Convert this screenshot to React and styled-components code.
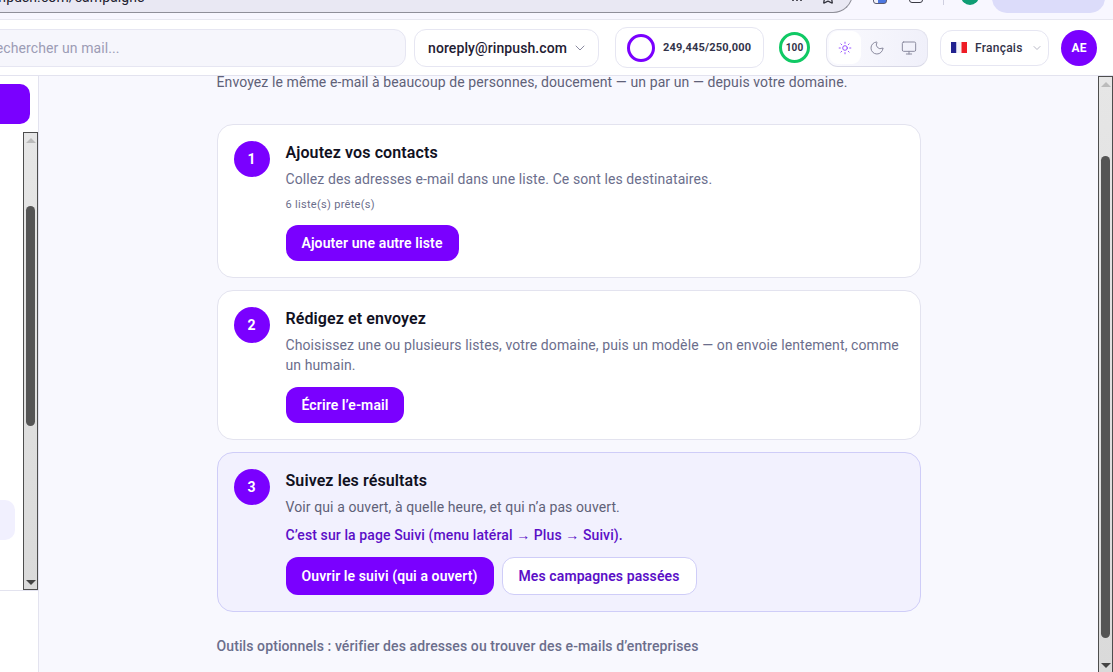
import React from 'react'
import styled, { createGlobalStyle } from 'styled-components'
import { ChevronDown, Moon, Monitor, Star, Sun } from 'lucide-react'

const GlobalStyle = createGlobalStyle`
  html, body {
    margin: 0;
    height: 100%;
    overflow: hidden;
  }
  * {
    box-sizing: border-box;
  }
  body {
    font-family: Roboto, "Noto Sans", sans-serif;
    letter-spacing: 0.1px;
    background: #f8f8fe;
    color: #11111f;
  }
`

const Page = styled.div`
  width: 1113px;
  height: 672px;
  display: flex;
  flex-direction: column;
  overflow: hidden;
`

const Chrome = styled.div`
  height: 20px;
  flex: none;
  display: flex;
  align-items: flex-start;
  background: #f8f7ff;
  overflow: hidden;
  border-bottom: 1px solid #e7e7f0;
`

const UrlBar = styled.div`
  width: 853px;
  height: 30px;
  margin-top: -17px;
  flex: none;
  display: flex;
  align-items: flex-start;
  padding: 6px 16px 0 0;
  background: #e9e8f3;
  border-bottom: 1px solid #8f8f99;
  border-right: 1px solid #8f8f99;
  border-bottom-right-radius: 20px;
  font-size: 14px;
  color: #222230;
  white-space: nowrap;
`

const UrlText = styled.span`
  margin-left: -10px;
  flex: 1;
`

const Translate = styled.div`
  width: 10px;
  height: 12px;
  flex: none;
  margin: 0 18px 0 0;
  border-bottom: 2px dotted #55555f;
`

const StarSlot = styled.div`
  flex: none;
  color: #33333d;
  svg {
    display: block;
  }
`

const ChromeIcons = styled.div`
  flex: 1;
  display: flex;
  align-items: flex-start;
`

const ExtensionIcon = styled.div`
  width: 14px;
  height: 14px;
  flex: none;
  margin: -10px 0 0 20px;
  background: linear-gradient(90deg, #f2f2fa 35%, #4d78e0 35%);
  border: 1px solid #5a5a70;
  border-radius: 3px;
`

const TabsIcon = styled.div`
  width: 14px;
  height: 14px;
  flex: none;
  margin: -11px 0 0 22px;
  border: 1.5px solid #3a3a44;
  border-radius: 3px;
`

const Divider = styled.div`
  width: 1px;
  height: 5px;
  flex: none;
  margin-left: 20px;
  background: #cfcfe0;
`

const ProfilePhoto = styled.div`
  width: 18px;
  height: 18px;
  flex: none;
  margin: -13px 0 0 17px;
  background: #0f9d74;
  border-radius: 50%;
`

const Profile = styled.div`
  width: 113px;
  height: 30px;
  margin: -17px 0 0 13px;
  flex: none;
  background: #dcdcfa;
  border-radius: 15px;
`

const TopBar = styled.header`
  height: 56px;
  flex: none;
  display: flex;
  align-items: center;
  justify-content: flex-end;
  gap: 8px;
  padding-right: 16px;
  background: #fff;
  border-bottom: 1px solid #e3e3ef;
  overflow: hidden;
`

const Search = styled.div`
  width: 460px;
  height: 38px;
  flex: none;
  display: flex;
  align-items: center;
  padding-left: 40px;
  background: #f6f6fc;
  border: 1px solid #e6e6f2;
  border-radius: 12px;
  font-size: 14px;
  color: #9c9cb5;
`

const Sender = styled.div`
  width: 185px;
  height: 38px;
  flex: none;
  display: flex;
  align-items: center;
  justify-content: space-between;
  padding: 0 10px 0 13px;
  border: 1px solid #e6e6f2;
  border-radius: 12px;
  font-size: 14px;
  font-weight: 500;
  color: #1f2033;
  svg {
    color: #8a8aa0;
  }
`

const Quota = styled.div`
  width: 149px;
  height: 41px;
  flex: none;
  margin-left: 8px;
  display: flex;
  align-items: center;
  gap: 8px;
  padding-left: 11px;
  border: 1px solid #e6e6f2;
  border-radius: 12px;
  font-size: 11px;
  font-weight: 700;
  letter-spacing: 0.2px;
  color: #33344a;
`

const QuotaRing = styled.div`
  width: 28px;
  height: 28px;
  flex: none;
  border: 3px solid #7a00ff;
  border-radius: 50%;
`

const ScoreRing = styled.div`
  width: 31px;
  height: 31px;
  flex: none;
  margin: 0 8px 0 7px;
  display: flex;
  align-items: center;
  justify-content: center;
  border: 3px solid #10c964;
  border-radius: 50%;
  font-size: 10px;
  font-weight: 700;
  color: #33344a;
`

const ThemeGroup = styled.div`
  width: 102px;
  height: 38px;
  flex: none;
  margin-right: 4px;
  display: flex;
  align-items: center;
  padding: 2px;
  background: linear-gradient(90deg, #fafafe, #f0f0fa);
  border: 1px solid #e3e3ee;
  border-bottom-color: #d8d8e6;
  border-radius: 12px;
`

const ThemeButton = styled.div`
  width: 32px;
  height: 33px;
  flex: none;
  display: flex;
  align-items: center;
  justify-content: center;
  border-radius: 9px;
  background: ${(p) => (p.$active ? '#fff' : 'transparent')};
  color: ${(p) => (p.$active ? '#8a3dff' : '#8b8b9f')};
  svg {
    width: ${(p) => (p.$active ? 14 : 16)}px;
    height: ${(p) => (p.$active ? 14 : 16)}px;
  }
`

const Language = styled.div`
  width: 109px;
  height: 36px;
  flex: none;
  margin-right: 4px;
  display: flex;
  align-items: center;
  padding: 0 10px;
  gap: 8px;
  border: 1px solid #e6e6f2;
  border-radius: 12px;
  font-size: 12px;
  font-weight: 500;
  letter-spacing: 0.25px;
  color: #33344a;
  svg {
    flex: none;
  }
  svg:last-child {
    margin-left: auto;
    color: #a0a0b2;
  }
`

const Avatar = styled.div`
  width: 36px;
  height: 36px;
  flex: none;
  display: flex;
  align-items: center;
  justify-content: center;
  background: #7a00ff;
  border-radius: 50%;
  font-size: 12px;
  font-weight: 700;
  color: #fff;
`

const Body = styled.div`
  flex: 1;
  display: flex;
  min-height: 0;
`

const Sidebar = styled.aside`
  width: 39px;
  flex: none;
  display: flex;
  flex-direction: column;
  background: #fff;
  border-right: 1px solid #e3e3ef;
`

const NewButton = styled.div`
  width: 60px;
  height: 40px;
  flex: none;
  margin: 8px 0 8px -30px;
  background: #7a00ff;
  border-radius: 10px;
`

const SidePane = styled.div`
  height: 459px;
  flex: none;
  display: flex;
  border-bottom: 1px solid #e3e3ef;
`

const SideList = styled.div`
  flex: 1;
  display: flex;
  align-items: flex-end;
  padding-bottom: 50px;
  overflow: hidden;
`

const SideItem = styled.div`
  width: 15px;
  height: 40px;
  flex: none;
  background: #f1f0fe;
  border-radius: 0 10px 10px 0;
`

const ScrollTrack = styled.div`
  width: 15px;
  flex: none;
  display: flex;
  flex-direction: column;
  align-items: center;
  background: linear-gradient(#e6e6e6, #dadada);
  border: 1px solid #4d4d4d;
  ${(p) => p.$flushBottom && 'border-bottom: none;'}
`

const Arrow = styled.div`
  width: 0;
  height: 0;
  flex: none;
  border-left: 5px solid transparent;
  border-right: 5px solid transparent;
  ${(p) =>
    p.$down
      ? `border-top: 5px solid #444; margin: auto 0 4px;`
      : `border-bottom: 5px solid #bbb; margin-top: 5px;`}
`

const Thumb = styled.div`
  width: 9px;
  flex: none;
  height: ${(p) => p.$size}px;
  margin-top: ${(p) => p.$offset}px;
  background: #555;
  border-radius: 5px;
`

const Main = styled.main`
  flex: 1;
  min-width: 0;
  overflow: hidden;
`

const Content = styled.div`
  width: 704px;
  margin: 0 auto;
`

const Lead = styled.p`
  margin: 0 0 36px;
  height: 12px;
  display: flex;
  align-items: center;
  font-size: 14px;
  color: #5f6178;
  white-space: nowrap;
`

const Steps = styled.div`
  display: flex;
  flex-direction: column;
  gap: 12px;
`

const Step = styled.section`
  display: flex;
  gap: 16px;
  padding: 16px;
  background: ${(p) => (p.$tint ? '#f2f1fe' : '#fff')};
  border: 1px solid ${(p) => (p.$tint ? '#cfcdf8' : '#e3e3ef')};
  border-radius: 16px;
`

const Badge = styled.div`
  width: 36px;
  height: 36px;
  flex: none;
  display: flex;
  align-items: center;
  justify-content: center;
  background: #7a00ff;
  border-radius: 50%;
  font-size: 14px;
  font-weight: 700;
  color: #fff;
`

const StepBody = styled.div`
  flex: 1;
  min-width: 0;
`

const StepTitle = styled.h3`
  margin: 0 0 4px;
  font-size: 16px;
  line-height: 24px;
  font-weight: 600;
  color: #11111f;
`

const StepText = styled.p`
  margin: 0;
  font-size: 14px;
  line-height: 20px;
  color: ${(p) => (p.$tint ? '#5f6178' : '#6b6e8c')};
`

const Note = styled.p`
  margin: 8px 0 0;
  font-size: 11px;
  line-height: 16px;
  letter-spacing: 0.3px;
  color: #6b6e8c;
`

const Hint = styled.p`
  margin: 8px 0 0;
  font-size: 14px;
  line-height: 20px;
  font-weight: 500;
  color: #5b0fc7;
`

const Actions = styled.div`
  display: flex;
  gap: 8px;
  margin-top: 12px;
`

const Button = styled.div`
  display: flex;
  align-items: center;
  padding: 0 16px;
  height: ${(p) => p.$h || 36}px;
  background: ${(p) => (p.$ghost ? '#fff' : '#7a00ff')};
  border: ${(p) => (p.$ghost ? '1px solid #cfcdf8' : 'none')};
  border-radius: 12px;
  font-size: 14px;
  font-weight: 600;
  color: ${(p) => (p.$ghost ? '#5b0fc7' : '#fff')};
  white-space: nowrap;
`

const Foot = styled.p`
  margin: 24px 0 0;
  font-size: 14px;
  line-height: 20px;
  font-weight: 500;
  color: #6b6e8c;
`

function Flag() {
  return (
    <svg width="16" height="11" viewBox="0 0 16 11">
      <rect width="5.5" height="11" fill="#22228f" />
      <rect x="5.5" width="5" height="11" fill="#f4f4fa" />
      <rect x="10.5" width="5.5" height="11" fill="#ee1c25" />
    </svg>
  )
}

export default function App() {
  return (
    <Page>
      <GlobalStyle />
      <Chrome>
        <UrlBar>
          <UrlText>rinpush.com/campaigns</UrlText>
          <Translate />
          <StarSlot>
            <Star size={16} strokeWidth={2} />
          </StarSlot>
        </UrlBar>
        <ChromeIcons>
          <ExtensionIcon />
          <TabsIcon />
          <Divider />
          <ProfilePhoto />
          <Profile />
        </ChromeIcons>
      </Chrome>
      <TopBar>
        <Search>Rechercher un mail...</Search>
        <Sender>
          noreply@rinpush.com
          <ChevronDown size={16} strokeWidth={1.5} />
        </Sender>
        <Quota>
          <QuotaRing />
          249,445/250,000
        </Quota>
        <ScoreRing>100</ScoreRing>
        <ThemeGroup>
          <ThemeButton $active><Sun strokeWidth={1.5} /></ThemeButton>
          <ThemeButton><Moon strokeWidth={1.5} /></ThemeButton>
          <ThemeButton><Monitor strokeWidth={1.5} /></ThemeButton>
        </ThemeGroup>
        <Language>
          <Flag />
          Français
          <ChevronDown size={12} strokeWidth={1.5} />
        </Language>
        <Avatar>AE</Avatar>
      </TopBar>
      <Body>
        <Sidebar>
          <NewButton />
          <SidePane>
            <SideList>
              <SideItem />
            </SideList>
            <ScrollTrack>
              <Arrow />
              <Thumb $size={220} $offset={63} />
              <Arrow $down />
            </ScrollTrack>
          </SidePane>
        </Sidebar>
        <Main>
          <Content>
            <Lead>Envoyez le même e-mail à beaucoup de personnes, doucement — un par un — depuis votre domaine.</Lead>
            <Steps>
              <Step>
                <Badge>1</Badge>
                <StepBody>
                  <StepTitle>Ajoutez vos contacts</StepTitle>
                  <StepText>Collez des adresses e-mail dans une liste. Ce sont les destinataires.</StepText>
                  <Note>6 liste(s) prête(s)</Note>
                  <Actions>
                    <Button>Ajouter une autre liste</Button>
                  </Actions>
                </StepBody>
              </Step>
              <Step>
                <Badge>2</Badge>
                <StepBody>
                  <StepTitle>Rédigez et envoyez</StepTitle>
                  <StepText>Choisissez une ou plusieurs listes, votre domaine, puis un modèle — on envoie lentement, comme un humain.</StepText>
                  <Actions>
                    <Button>Écrire l’e-mail</Button>
                  </Actions>
                </StepBody>
              </Step>
              <Step $tint>
                <Badge>3</Badge>
                <StepBody>
                  <StepTitle>Suivez les résultats</StepTitle>
                  <StepText $tint>Voir qui a ouvert, à quelle heure, et qui n’a pas ouvert.</StepText>
                  <Hint>C’est sur la page Suivi (menu latéral → Plus → Suivi).</Hint>
                  <Actions>
                    <Button $h={38}>Ouvrir le suivi (qui a ouvert)</Button>
                    <Button $h={38} $ghost>Mes campagnes passées</Button>
                  </Actions>
                </StepBody>
              </Step>
            </Steps>
            <Foot>Outils optionnels : vérifier des adresses ou trouver des e-mails d’entreprises</Foot>
          </Content>
        </Main>
        <ScrollTrack $flushBottom>
          <Arrow />
          <Thumb $size={482} $offset={69} />
          <Arrow $down />
        </ScrollTrack>
      </Body>
    </Page>
  )
}
